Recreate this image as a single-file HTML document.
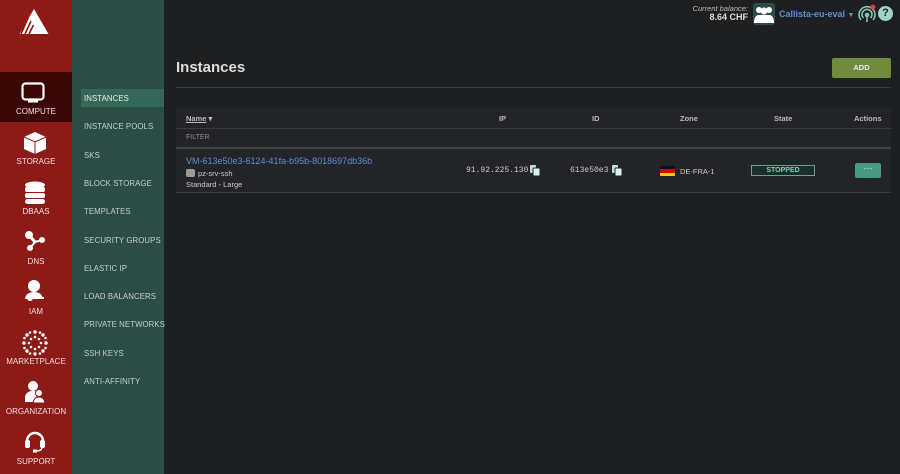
<!DOCTYPE html>
<html><head><meta charset="utf-8"><style>
*{margin:0;padding:0;box-sizing:border-box}
body{width:900px;height:474px;overflow:hidden;background:#1e1f21;font-family:"Liberation Sans",sans-serif;position:relative;color:#ddd}
#red{position:absolute;left:0;top:0;width:72px;height:474px;background:#8c1b17}
#green{position:absolute;left:72px;top:0;width:92px;height:474px;background:#2c4d45}
.ni{position:absolute;left:0;width:72px;text-align:center;color:#f0dede;font-size:8px}
.gi{position:absolute;left:84px;font-size:7.8px;color:#c2d0cc;letter-spacing:0.1px}
.a{position:absolute}
</style></head><body>
<div id="red"></div>
<div id="green"></div>
<svg class="a" style="left:19px;top:9px" width="30" height="26" viewBox="0 0 30 26"><polygon points="15,0 29.5,25 0.5,25" fill="#fff"/><line x1="9.5" y1="8" x2="2" y2="25" stroke="#8c1b17" stroke-width="1.6"/><line x1="12" y1="12" x2="6" y2="25" stroke="#8c1b17" stroke-width="1.6"/><line x1="14.5" y1="16" x2="10" y2="25" stroke="#8c1b17" stroke-width="1.6"/></svg>
<div class="a" style="left:0;top:72px;width:72px;height:50px;background:#3b0807"></div>
<svg class="a" style="left:21px;top:82px" width="24" height="22"><rect x="1.5" y="1.5" width="21" height="16" rx="3" fill="none" stroke="#fff" stroke-width="2.2"/><rect x="7" y="18" width="10" height="2.5" fill="#fff"/></svg>
<div class="ni" style="top:107px">COMPUTE</div>
<svg class="a" style="left:23px;top:131px" width="24" height="24"><polygon points="12,1 23,6 23,18 12,23 1,18 1,6" fill="#fff"/><polyline points="1,6 12,11 23,6" fill="none" stroke="#8c1b17" stroke-width="1"/><line x1="12" y1="11" x2="12" y2="23" stroke="#8c1b17"/></svg>
<div class="ni" style="top:157px">STORAGE</div>
<svg class="a" style="left:24px;top:181px" width="22" height="24"><ellipse cx="11" cy="4" rx="10" ry="3.5" fill="#fff"/><rect x="1" y="6" width="20" height="5" rx="2" fill="#fff"/><rect x="1" y="12" width="20" height="5" rx="2" fill="#fff"/><rect x="1" y="18" width="20" height="5" rx="2.5" fill="#fff"/></svg>
<div class="ni" style="top:207px">DBAAS</div>
<svg class="a" style="left:24px;top:231px" width="22" height="22"><line x1="5" y1="4" x2="11" y2="11" stroke="#fff" stroke-width="3"/><line x1="11" y1="11" x2="18" y2="9" stroke="#fff" stroke-width="2"/><line x1="11" y1="11" x2="6" y2="17" stroke="#fff" stroke-width="2"/><circle cx="5" cy="4" r="4" fill="#fff"/><circle cx="18" cy="9" r="3" fill="#fff"/><circle cx="6" cy="17" r="3" fill="#fff"/></svg>
<div class="ni" style="top:257px">DNS</div>
<svg class="a" style="left:24px;top:279px" width="22" height="24"><circle cx="10" cy="7" r="6" fill="#fff"/><path d="M1 20 Q2 13 10 13 Q18 13 19 20Z" fill="#fff"/><circle cx="6" cy="19" r="3" fill="#fff"/><rect x="8" y="18" width="12" height="2" fill="#fff"/></svg>
<div class="ni" style="top:307px">IAM</div>
<svg class="a" style="left:22px;top:330px" width="26" height="26"><g fill="#fff"><circle cx="13" cy="2" r="1.7"/><circle cx="13" cy="24" r="1.7"/><circle cx="2" cy="13" r="1.7"/><circle cx="24" cy="13" r="1.7"/><circle cx="5" cy="5" r="1.7"/><circle cx="21" cy="5" r="1.7"/><circle cx="5" cy="21" r="1.7"/><circle cx="21" cy="21" r="1.7"/><circle cx="8" cy="2.5" r="1.3"/><circle cx="18" cy="2.5" r="1.3"/><circle cx="8" cy="23.5" r="1.3"/><circle cx="18" cy="23.5" r="1.3"/><circle cx="2.5" cy="8" r="1.3"/><circle cx="2.5" cy="18" r="1.3"/><circle cx="23.5" cy="8" r="1.3"/><circle cx="23.5" cy="18" r="1.3"/><circle cx="13" cy="7" r="1.3"/><circle cx="13" cy="19" r="1.3"/><circle cx="7" cy="13" r="1.3"/><circle cx="19" cy="13" r="1.3"/><circle cx="9" cy="9" r="1.3"/><circle cx="17" cy="9" r="1.3"/><circle cx="9" cy="17" r="1.3"/><circle cx="17" cy="17" r="1.3"/></g></svg>
<div class="ni" style="top:357px">MARKETPLACE</div>
<svg class="a" style="left:24px;top:380px" width="22" height="24"><circle cx="9" cy="6" r="5" fill="#fff"/><path d="M1 17 Q2 11 9 11 Q13 11 14 13 L10 22 L1 22Z" fill="#fff"/><circle cx="15" cy="13" r="3.5" fill="#fff" stroke="#8c1b17"/><path d="M9 23 Q10 17 15 17 Q20 17 21 23Z" fill="#fff" stroke="#8c1b17"/></svg>
<div class="ni" style="top:407px">ORGANIZATION</div>
<svg class="a" style="left:24px;top:429px" width="22" height="24"><path d="M3 12 A8 8 0 0 1 19 12" fill="none" stroke="#fff" stroke-width="2.5"/><rect x="1" y="11" width="5" height="8" rx="2" fill="#fff"/><rect x="16" y="11" width="5" height="8" rx="2" fill="#fff"/><path d="M18 19 Q17 22 12 22" fill="none" stroke="#fff" stroke-width="1.5"/><rect x="9" y="20.5" width="4" height="3" fill="#fff"/></svg>
<div class="ni" style="top:457px">SUPPORT</div>

<div class="a" style="left:81px;top:89px;width:83px;height:18px;background:#356858"></div>
<div class="gi" style="top:94px;color:#e8efed">INSTANCES</div>
<div class="gi" style="top:122px">INSTANCE POOLS</div>
<div class="gi" style="top:151px">SKS</div>
<div class="gi" style="top:179px">BLOCK STORAGE</div>
<div class="gi" style="top:207px">TEMPLATES</div>
<div class="gi" style="top:236px">SECURITY GROUPS</div>
<div class="gi" style="top:264px">ELASTIC IP</div>
<div class="gi" style="top:292px">LOAD BALANCERS</div>
<div class="gi" style="top:320px">PRIVATE NETWORKS</div>
<div class="gi" style="top:349px">SSH KEYS</div>
<div class="gi" style="top:377px">ANTI-AFFINITY</div>

<div class="a" style="left:680px;top:5px;width:68px;text-align:right;font-size:7.5px;font-style:italic;color:#bbb;line-height:8px">Current balance:<br><b style="font-style:normal;font-size:9px;color:#ddd">8.64 CHF</b></div>
<div class="a" style="left:753px;top:3px;width:22px;height:22px;background:#2c4d45;border-radius:3px"><svg width="22" height="22"><g fill="#fff"><circle cx="6" cy="7" r="3"/><circle cx="16" cy="7" r="3"/><circle cx="11" cy="8" r="3.5"/><path d="M1 20 Q1 12 6 12 L16 12 Q21 12 21 20Z"/></g></svg></div>
<div class="a" style="left:779px;top:9px;font-size:9px;font-weight:bold;color:#5b8fd6">Callista-eu-eval <span style="font-size:7px">▼</span></div>
<svg class="a" style="left:857px;top:4px" width="20" height="20"><g fill="none" stroke="#7fc4b0" stroke-width="1.6"><path d="M4 16 A8 8 0 1 1 16 16"/><path d="M6.5 14 A5 5 0 1 1 13.5 14"/><circle cx="10" cy="11" r="1.5" fill="#7fc4b0"/><line x1="10" y1="12" x2="10" y2="18"/></g><circle cx="16" cy="3" r="2.5" fill="#e03a3a"/></svg>
<div class="a" style="left:878px;top:6px;width:15px;height:15px;border-radius:50%;background:#9fd5c5;color:#1e1f21;font-size:11px;font-weight:bold;text-align:center;line-height:15px">?</div>

<div class="a" style="left:176px;top:59px;font-size:15px;font-weight:bold;color:#ddd">Instances</div>
<div class="a" style="left:832px;top:58px;width:59px;height:20px;background:#6e8c3b;border-radius:2px;font-size:7.5px;font-weight:bold;color:#eee;text-align:center;line-height:20px">ADD</div>
<div class="a" style="left:176px;top:87px;width:715px;height:1px;background:#3a3b3e"></div>

<div class="a" style="left:176px;top:108px;width:715px;height:85px;background:#232427"></div>
<div class="a" style="left:176px;top:128px;width:715px;height:1px;background:#3a3b3e"></div>
<div class="a" style="left:176px;top:147px;width:715px;height:2px;background:#3e4043"></div>
<div class="a" style="left:176px;top:192px;width:715px;height:1px;background:#3a3b3e"></div>
<div class="a" style="left:186px;top:114px;font-size:7.5px;font-weight:bold;color:#bbb"><u>Name</u> ▾</div>
<div class="a" style="left:499px;top:114px;font-size:7.5px;font-weight:bold;color:#bbb">IP</div>
<div class="a" style="left:592px;top:114px;font-size:7.5px;font-weight:bold;color:#bbb">ID</div>
<div class="a" style="left:680px;top:114px;font-size:7.5px;font-weight:bold;color:#bbb">Zone</div>
<div class="a" style="left:774px;top:114px;font-size:7.5px;font-weight:bold;color:#bbb">State</div>
<div class="a" style="left:854px;top:114px;font-size:7.5px;font-weight:bold;color:#bbb">Actions</div>
<div class="a" style="left:186px;top:134px;font-size:7px;color:#888">FILTER</div>
<div class="a" style="left:186px;top:156px;font-size:9px;color:#5b8fd6">VM-613e50e3-6124-41fa-b95b-8018697db36b</div>
<div class="a" style="left:186px;top:169px;width:9px;height:8px;background:#999;border-radius:2px"></div>
<div class="a" style="left:198px;top:169px;font-size:7.5px;color:#ccc">pz-srv-ssh</div>
<div class="a" style="left:186px;top:180px;font-size:7.5px;color:#ccc">Standard - Large</div>
<div class="a" style="left:466px;top:166px;font-size:8px;font-family:'Liberation Mono',monospace;color:#ccc">91.92.225.130</div>
<svg class="a" style="left:529px;top:164px" width="12" height="13"><rect x="1" y="1" width="6" height="8" rx="1" fill="#bfe0d6"/><rect x="4" y="4" width="7" height="8" rx="1" fill="#e0f0eb" stroke="#232427"/></svg>
<div class="a" style="left:570px;top:166px;font-size:8px;font-family:'Liberation Mono',monospace;color:#ccc">613e50e3</div>
<svg class="a" style="left:611px;top:164px" width="12" height="13"><rect x="1" y="1" width="6" height="8" rx="1" fill="#bfe0d6"/><rect x="4" y="4" width="7" height="8" rx="1" fill="#e0f0eb" stroke="#232427"/></svg>
<div class="a" style="left:660px;top:166px;width:15px;height:10px;border-radius:1px;overflow:hidden"><div style="height:3.3px;background:#111"></div><div style="height:3.3px;background:#d00"></div><div style="height:3.4px;background:#fc0"></div></div>
<div class="a" style="left:680px;top:167px;font-size:7.5px;color:#ccc">DE-FRA-1</div>
<div class="a" style="left:751px;top:165px;width:64px;height:11px;border:1px solid #5aa890;background:#1b2e29;font-size:7px;font-weight:bold;color:#7fd0b7;text-align:center;line-height:9px">STOPPED</div>
<div class="a" style="left:855px;top:163px;width:26px;height:15px;background:#4a9a82;border-radius:2px;color:#fff;font-size:9px;text-align:center;line-height:11px">···</div>
</body></html>
